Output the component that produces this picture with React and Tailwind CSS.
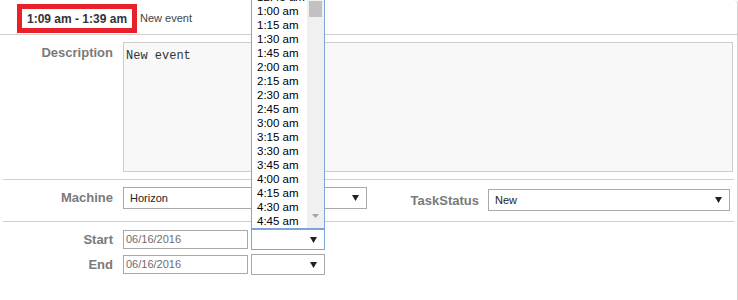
import React from "react";

const times = ["12:45 am","1:00 am","1:15 am","1:30 am","1:45 am","2:00 am","2:15 am","2:30 am","2:45 am","3:00 am","3:15 am","3:30 am","3:45 am","4:00 am","4:15 am","4:30 am","4:45 am"];

function Arrow() {
  return (
    <svg width="7" height="6" viewBox="0 0 7 6" className="shrink-0">
      <path d="M0 0 H7 L3.5 6 Z" fill="#222" />
    </svg>
  );
}

function Select({ w, h, text, focused, className = "" }) {
  return (
    <div
      className={`flex items-center justify-between pl-[6px] pr-[7px] bg-white border ${focused ? "border-[#7ea4d8]" : "border-[#a9a9a9]"} text-[11px] text-[#222] ${w} ${h} ${className}`}
    >
      <span>{text}</span>
      <Arrow />
    </div>
  );
}

function DateInput({ className = "" }) {
  return (
    <div className={`w-[125px] h-[19px] border border-[#a9a9a9] bg-white flex items-center pl-[2px] text-[11px] text-[#6d6d6d] ${className}`}>
      06/16/2016
    </div>
  );
}

function Label({ children, className = "" }) {
  return (
    <div className={`w-[113px] shrink-0 text-right font-bold text-[13px] text-[#7a7a7a] ${className}`}>
      {children}
    </div>
  );
}

export default function App() {
  return (
    <div className="relative w-[738px] h-[300px] bg-white overflow-hidden" style={{ fontFamily: '"Liberation Sans", Arial, sans-serif' }}>
      <div className="w-[738px] h-[300px] border-r border-[#cfcfcf] rounded-tr-[4px]">
        {/* header */}
        <div className="h-[35px] flex items-start pl-[17px] pt-[4px] border-b border-[#cfcfcf]">
          <div className="h-[29px] border-[5px] border-[#e8202a] px-[5px] flex items-center font-bold text-[12px] text-[#333]">
            1:09 am - 1:39 am
          </div>
          <div className="ml-[3px] h-[29px] flex items-center text-[11px] text-[#444]">New event</div>
        </div>

        <div className="px-[3px]">
          {/* description */}
          <div className="flex pt-[7px] pb-[7px] border-b border-[#cfcfcf]">
            <Label className="pt-[1px] -ml-[3px] w-[113px]">Description</Label>
            <div className="ml-[10px] w-[610px] h-[130px] bg-[#f8f8f8] border border-[#cccccc] pl-[2px] pt-[4px] text-[12px] text-[#333]" style={{ fontFamily: '"Liberation Mono", "Courier New", monospace' }}>
              New event
            </div>
          </div>

          {/* machine / task status */}
          <div className="flex items-start pt-[7px] h-[42px] border-b border-[#cfcfcf]">
            <Label className="pt-[1px] -ml-[3px]">Machine</Label>
            <Select w="w-[244px]" h="h-[22px]" text="Horizon" className="ml-[10px]" />
            <div className="w-[112px] shrink-0 text-right font-bold text-[13px] text-[#7a7a7a] pt-[4px]">TaskStatus</div>
            <Select w="w-[242px]" h="h-[22px]" text="New" className="ml-[9px] mt-[2px]" />
          </div>

          {/* start */}
          <div className="flex items-start pt-[7px]">
            <Label className="pt-[1px] -ml-[3px]">Start</Label>
            <DateInput className="ml-[10px] mt-[1px]" />
            <Select w="w-[74px]" h="h-[21px]" text="" focused className="ml-[3px]" />
          </div>
          {/* end */}
          <div className="flex items-start pt-[4px]">
            <Label className="pt-[1px] -ml-[3px]">End</Label>
            <DateInput className="ml-[10px] mt-[1px]" />
            <Select w="w-[74px]" h="h-[21px]" text="" className="ml-[3px]" />
          </div>
        </div>
      </div>

      {/* dropdown list */}
      <div className="absolute left-[251px] top-[-11px] w-[74px] h-[240px] bg-white border border-[#7ea4d8] flex overflow-hidden">
        <div className="flex-1 overflow-hidden">
          {times.map((t) => (
            <div key={t} className="h-[14px] leading-[14px] pl-[5px] text-[11.5px] text-black whitespace-nowrap">
              {t}
            </div>
          ))}
        </div>
        <div className="w-[17px] h-full bg-[#f0f0f0] relative">
          <div className="absolute left-[2px] right-[2px] top-[11px] h-[16px] bg-[#c1c1c1]" />
          <svg width="7" height="4" viewBox="0 0 7 4" className="absolute left-[5px] bottom-[10px]">
            <path d="M0 0 H7 L3.5 4 Z" fill="#a3a3a3" />
          </svg>
        </div>
      </div>
    </div>
  );
}
